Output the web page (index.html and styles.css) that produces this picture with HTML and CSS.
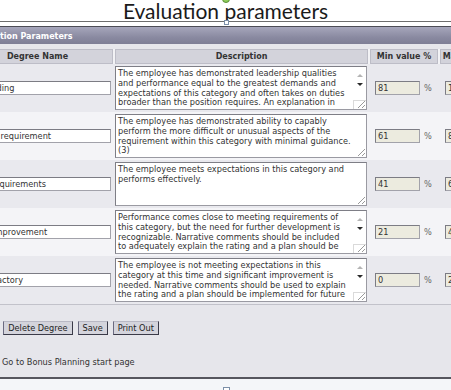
FILE: index.html
```html
<!DOCTYPE html>
<html lang="en">

<head>
    <meta charset="UTF-8">
    <meta name="viewport" content="width=device-width, initial-scale=1.0">
    <title>Evaluation parameters</title>
    <link rel="stylesheet" href="styles.css">
</head>

<body>
    <div class="slide-head">
        <h1>Evaluation parameters</h1>
        <span class="handle-rotate"></span>
        <span class="handle-top"></span>
    </div>

    <div class="shot">
        <div class="panel">
            <div class="panel-title">Evaluation Parameters</div>
            <table class="params">
                <colgroup>
                    <col class="col-name">
                    <col class="col-desc">
                    <col class="col-min">
                    <col class="col-max">
                </colgroup>
                <thead>
                    <tr>
                        <th>Degree Name</th>
                        <th>Description</th>
                        <th>Min value %</th>
                        <th>Max value %</th>
                    </tr>
                </thead>
                <tbody>
                    <tr>
                        <td class="name"><input type="text" value="Outstanding"></td>
                        <td class="desc-cell">
                            <div class="desc">
                                <textarea readonly wrap="off">The employee has demonstrated leadership qualities
and performance equal to the greatest demands and
expectations of this category and often takes on duties
broader than the position requires. An explanation in</textarea>
                                <div class="vscroll"><span class="arrow up"></span><span class="arrow down"></span><span class="corner"></span></div>
                                <span class="grip"></span>
                            </div>
                        </td>
                        <td class="num"><input type="text" value="81"><span class="pct">%</span></td>
                        <td class="num max"><input type="text" value="100"></td>
                    </tr>
                    <tr class="alt">
                        <td class="name"><input type="text" value="Exceeds requirement"></td>
                        <td class="desc-cell">
                            <div class="desc">
                                <textarea readonly wrap="off">The employee has demonstrated ability to capably
perform the more difficult or unusual aspects of the
requirement within this category with minimal guidance.
(3)</textarea>
                                <span class="grip"></span>
                            </div>
                        </td>
                        <td class="num"><input type="text" value="61"><span class="pct">%</span></td>
                        <td class="num max"><input type="text" value="80"></td>
                    </tr>
                    <tr>
                        <td class="name"><input type="text" value="Meets requirements"></td>
                        <td class="desc-cell">
                            <div class="desc">
                                <textarea readonly wrap="off">The employee meets expectations in this category and
performs effectively.</textarea>
                                <span class="grip"></span>
                            </div>
                        </td>
                        <td class="num"><input type="text" value="41"><span class="pct">%</span></td>
                        <td class="num max"><input type="text" value="60"></td>
                    </tr>
                    <tr class="alt">
                        <td class="name"><input type="text" value="Needs improvement"></td>
                        <td class="desc-cell">
                            <div class="desc">
                                <textarea readonly wrap="off">Performance comes close to meeting requirements of
this category, but the need for further development is
recognizable. Narrative comments should be included
to adequately explain the rating and a plan should be</textarea>
                                <div class="vscroll"><span class="arrow up"></span><span class="arrow down"></span><span class="corner"></span></div>
                                <span class="grip"></span>
                            </div>
                        </td>
                        <td class="num"><input type="text" value="21"><span class="pct">%</span></td>
                        <td class="num max"><input type="text" value="40"></td>
                    </tr>
                    <tr>
                        <td class="name"><input type="text" value="Unsatisfactory"></td>
                        <td class="desc-cell">
                            <div class="desc">
                                <textarea readonly wrap="off">The employee is not meeting expectations in this
category at this time and significant improvement is
needed. Narrative comments should be used to explain
the rating and a plan should be implemented for future</textarea>
                                <div class="vscroll"><span class="arrow up"></span><span class="arrow down"></span><span class="corner"></span></div>
                                <span class="grip"></span>
                            </div>
                        </td>
                        <td class="num"><input type="text" value="0"><span class="pct">%</span></td>
                        <td class="num max"><input type="text" value="20"></td>
                    </tr>
                </tbody>
            </table>

            <div class="actions">
                <button>Add Degree</button>
                <button>Delete Degree</button>
                <button>Save</button>
                <button>Print Out</button>
            </div>

            <p class="back"><a href="#">Go to Bonus Planning start page</a></p>
        </div>
    </div>

    <div class="slide-foot">
        <span class="handle-bottom"></span>
    </div>
</body>

</html>
```

FILE: styles.css
```css
/* General styles */
* {
    box-sizing: border-box;
}

body {
    margin: 0;
    width: 451px;
    height: 390px;
    overflow: hidden;
    background-color: #ffffff;
    font-family: "DejaVu Sans", Verdana, sans-serif;
    color: #333;
}

/* Slide title (editing frame) */
.slide-head {
    position: relative;
    height: 22px;
    border-bottom: 1px solid #6d6d6d;
    text-align: center;
}

.slide-head h1 {
    margin: 0;
    font-family: Lato, "Open Sans", sans-serif;
    font-weight: 400;
    font-size: 21px;
    line-height: 21px;
    color: #1b1b1b;
}

.handle-rotate {
    position: absolute;
    left: 222px;
    top: -5px;
    width: 8px;
    height: 8px;
    border-radius: 50%;
    background: #8fce5c;
    border: 1px solid #5b8d36;
}

.handle-top {
    position: absolute;
    left: 224px;
    top: 20px;
    width: 5px;
    height: 5px;
    background: #ffffff;
    border: 1px solid #7c8fa8;
}

/* Cropped application screenshot */
.shot {
    margin: 4px 0 0 -39px;
    width: 560px;
}

.panel {
    height: 353px;
    background: #e6e6eb;
    border-top: 1px solid #4c4c55;
    border-bottom: 2px solid #56565e;
}

.panel-title {
    height: 17px;
    padding: 2px 0 0 9px;
    line-height: 15px;
    font-size: 8px;
    font-weight: bold;
    color: #ffffff;
    background: linear-gradient(to bottom, #a6a6bb, #8a8aa1 60%, #7e7e95);
}

.params {
    margin-top: 5px;
    width: 542px;
    table-layout: fixed;
    border-collapse: separate;
    border-spacing: 0;
    border-bottom: 1px solid #c2c2ca;
}

.col-name {
    width: 153px;
}

.col-desc {
    width: 255px;
}

.col-min {
    width: 70px;
}

.col-max {
    width: 64px;
}

.params th {
    padding: 0;
    line-height: 15px;
    font-size: 8px;
    font-weight: bold;
    color: #333;
    background: #d3d3db;
    border-left: 1px solid #f2f2f5;
    border-right: 1px solid #f2f2f5;
    box-shadow: inset 0 0 0 1px #bdbdc7;
    white-space: nowrap;
    overflow: hidden;
}

.params td {
    padding: 2px 0;
    vertical-align: middle;
    background: #e9e9ee;
    font-size: 8.2px;
    white-space: nowrap;
    overflow: hidden;
}

.params tr.alt td {
    background: #f4f4f7;
}

.params input {
    height: 14px;
    padding: 0 2px;
    font-family: inherit;
    font-size: 8.2px;
    line-height: 12px;
    color: #333;
    border: 1px solid #a2a2aa;
    border-top-color: #7c7c84;
    border-left-color: #7c7c84;
    outline: none;
}

.params td.name {
    padding-left: 1px;
    padding-right: 3px;
}

.params td.name input {
    width: 149px;
    padding-left: 1px;
    background: #ffffff;
}

.params td.desc-cell {
    padding-left: 1px;
    padding-right: 2px;
}

.desc {
    position: relative;
    display: flex;
    width: 252px;
    height: 44px;
    background: #ffffff;
    border: 1px solid #9a9aa2;
    border-top-color: #7e7e86;
    border-left-color: #7e7e86;
}

.desc textarea {
    flex: 1;
    min-width: 0;
    margin: 0;
    padding: 2px 2px 0;
    border: none;
    outline: none;
    resize: none;
    overflow: hidden;
    white-space: pre;
    background: transparent;
    font-family: inherit;
    font-size: 8.2px;
    line-height: 9.8px;
    color: #333;
}

.vscroll {
    display: flex;
    flex-direction: column;
    align-items: center;
    width: 13px;
    flex: none;
}

.arrow {
    width: 0;
    height: 0;
    border-left: 3px solid transparent;
    border-right: 3px solid transparent;
}

.arrow.up {
    margin-top: 7px;
    border-bottom: 3px solid #b4b4b4;
}

.arrow.down {
    margin-top: 6px;
    border-top: 3px solid #2a2a2a;
}

.corner {
    margin-top: auto;
    width: 13px;
    height: 9px;
    border-top: 1px solid #dadada;
    border-left: 1px solid #dadada;
}

.grip {
    position: absolute;
    right: 1px;
    bottom: 1px;
    width: 7px;
    height: 7px;
    background: linear-gradient(135deg, transparent 45%, #9a9a9a 45%, #9a9a9a 55%, transparent 55%, transparent 72%, #9a9a9a 72%, #9a9a9a 82%, transparent 82%);
}

.params td.num {
    padding-left: 6px;
}

.params td.num input {
    width: 45px;
    background: #ecebdf;
}

.params td.max {
    padding-left: 6px;
}

.pct {
    margin-left: 4px;
    color: #666;
}

/* Buttons and links */
.actions {
    display: flex;
    gap: 5px;
    margin: 16px 0 0 -21px;
}

.actions button {
    height: 14px;
    padding: 0 4px;
    font-family: inherit;
    font-size: 8.2px;
    line-height: 12px;
    color: #222;
    background: #d4d4dc;
    border: 1px solid #6a6a80;
    border-top-color: #b8b8c4;
    border-right-color: #3a3a48;
    border-bottom-color: #3a3a48;
    cursor: pointer;
}

.back {
    margin: 22px 0 0;
    padding-left: 41px;
    font-size: 8.2px;
    line-height: 10px;
}

.back a {
    color: #333;
    text-decoration: none;
}

.slide-foot {
    position: relative;
    height: 11px;
    background: #f4f6f9;
}

.handle-bottom {
    position: absolute;
    left: 223px;
    top: 8px;
    width: 7px;
    height: 7px;
    background: #ffffff;
    border: 1px solid #7c8fa8;
}
```
